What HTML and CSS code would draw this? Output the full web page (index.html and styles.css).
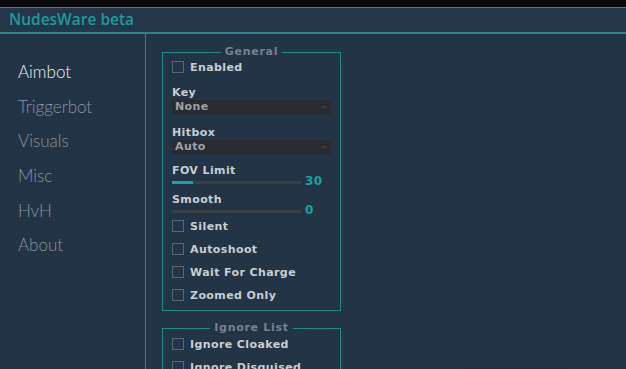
FILE: index.html
```html
<!DOCTYPE html>
<html lang="en">
<head>
    <meta charset="UTF-8">
    <title>NudesWare beta</title>
    <link rel="stylesheet" href="styles.css">
</head>
<body>

    <div class="window">
        <div class="titlebar">NudesWare beta</div>

        <div class="main">
            <!-- tabs -->
            <ul class="nav">
                <li class="active">Aimbot</li>
                <li>Triggerbot</li>
                <li>Visuals</li>
                <li>Misc</li>
                <li>HvH</li>
                <li>About</li>
            </ul>

            <div class="content">
                <fieldset class="group">
                    <legend>General</legend>

                    <label class="check first"><span class="box"></span>Enabled</label>

                    <div class="field">
                        <div class="label">Key</div>
                        <div class="combo">None<span class="arrow"></span></div>
                    </div>

                    <div class="field hitbox">
                        <div class="label">Hitbox</div>
                        <div class="combo">Auto<span class="arrow"></span></div>
                    </div>

                    <div class="field slider-field">
                        <div class="label">FOV Limit</div>
                        <div class="slider">
                            <div class="track"><div class="fill" style="width: 16%"></div></div>
                            <span class="value">30</span>
                        </div>
                    </div>

                    <div class="field slider-field smooth">
                        <div class="label">Smooth</div>
                        <div class="slider">
                            <div class="track"><div class="fill" style="width: 0%"></div></div>
                            <span class="value">0</span>
                        </div>
                    </div>

                    <label class="check"><span class="box"></span>Silent</label>
                    <label class="check"><span class="box"></span>Autoshoot</label>
                    <label class="check"><span class="box"></span>Wait For Charge</label>
                    <label class="check"><span class="box"></span>Zoomed Only</label>
                </fieldset>

                <fieldset class="group ignore">
                    <legend>Ignore List</legend>
                    <label class="check first"><span class="box"></span>Ignore Cloaked</label>
                    <label class="check"><span class="box"></span>Ignore Disguised</label>
                </fieldset>
            </div>
        </div>

        <div class="popup"></div>
    </div>

</body>
</html>
```

FILE: styles.css
```css
html, body {
    margin: 0;
    padding: 0;
    height: 100%;
    overflow: hidden;
}
body {
    background-color: #0a0a0e;
    padding-top: 7px;
    box-sizing: border-box;
}
.window {
    position: relative;
    height: 100%;
    background-color: #233447;
    border-top: 1px solid #1f8f8f;
    box-sizing: border-box;
}
.titlebar {
    height: 24px;
    line-height: 23px;
    padding-left: 9px;
    font-family: 'Open Sans', sans-serif;
    font-weight: 600;
    font-size: 15.5px;
    color: #1a9c9c;
    background-color: #25364a;
    border-bottom: 2px solid #1e8a8c;
}
.main {
    display: flex;
    height: calc(100% - 26px);
}
.nav {
    list-style: none;
    margin: 0;
    padding: 21px 0 0 18px;
    width: 127px;
    border-right: 1px solid #1e8a8c;
    font-family: 'Lato', sans-serif;
    font-weight: 300;
    font-size: 17px;
}
.nav li {
    height: 34.7px;
    line-height: 34px;
    color: #8793a0;
}
.nav li.active {
    color: #eef0f2;
}
.content {
    padding: 12px 0 0 16px;
    font-family: 'DejaVu Sans', sans-serif;
    font-weight: bold;
    font-size: 11px;
    color: #c8cdd2;
}
.group {
    width: 159px;
    margin: 0 0 11px 0;
    padding: 0 9px;
    border: 1px solid #1e8a8c;
}
.group legend {
    margin: 0 auto;
    padding: 0 4px;
    line-height: 12px;
    color: #76818c;
    letter-spacing: 0.7px;
}
.check {
    display: flex;
    align-items: center;
    height: 12px;
    margin-bottom: 11px;
    letter-spacing: 0.4px;
}
.check.first {
    margin-top: 3px;
    margin-bottom: 12px;
}
.ignore .check.first {
    margin-top: 4px;
    margin-bottom: 11px;
}
.group .check:last-child {
    margin-bottom: 9px;
}
.check .box {
    width: 10px;
    height: 10px;
    margin-right: 6px;
    border: 1px solid #5a656f;
    background-color: #24354a;
}
.field {
    margin-bottom: 11px;
}
.field.hitbox {
    margin-bottom: 10px;
}
.field .label {
    line-height: 15px;
    letter-spacing: 0.4px;
}
.combo {
    position: relative;
    height: 14px;
    line-height: 14px;
    padding-left: 3px;
    background-color: #2a2b30;
    color: #9ea2a8;
    letter-spacing: 0.4px;
}
.combo .arrow {
    position: absolute;
    right: 4px;
    top: 6px;
    border-left: 3px solid transparent;
    border-right: 3px solid transparent;
    border-top: 3px solid #3c3e44;
}
.slider-field {
    margin-bottom: 2px;
}
.slider-field .label {
    line-height: 14px;
}
.slider {
    display: flex;
    align-items: flex-start;
    height: 13px;
}
.track {
    width: 129px;
    height: 3px;
    margin-top: 3px;
    background-color: #3a3f46;
}
.fill {
    height: 100%;
    background-color: #1aa2a2;
}
.value {
    margin-left: 4px;
    margin-top: -4px;
    font-size: 12px;
    color: #1aa2a2;
    letter-spacing: 0.4px;
}
.smooth {
    margin-bottom: 0;
}
.popup {
    position: absolute;
    left: 462px;
    bottom: 0;
    width: 108px;
    height: 1px;
    background-color: #2c2c30;
}
```
